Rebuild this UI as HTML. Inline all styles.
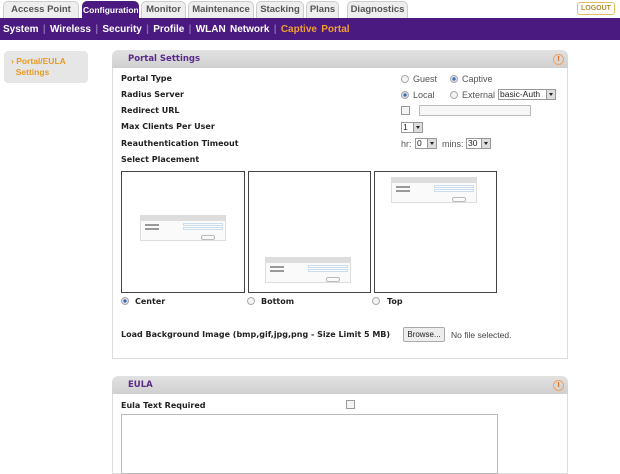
<!DOCTYPE html>
<html><head><style>
*{margin:0;padding:0;box-sizing:border-box}
body{width:620px;height:465px;overflow:hidden;background:#fff;font-family:"Liberation Sans",sans-serif;font-size:9px;color:#222;position:relative}
.a{position:absolute}
.tab{position:absolute;top:1px;height:18px;background:#eee;border:1px solid #ccc;border-bottom:none;border-radius:5px 5px 0 0;font-weight:bold;font-size:9.5px;color:#555;text-align:center;line-height:16px;white-space:nowrap;overflow:hidden}
.b{font-weight:bold}
.lbl{position:absolute;left:121px;font-weight:bold;font-size:8px;font-family:"DejaVu Sans",sans-serif}
.rad{position:absolute;width:8px;height:8px;border-radius:50%;border:1px solid #aaa;background:#f4f4f4}
.rad.on{background:radial-gradient(circle,#3a6fb0 35%,#dde 45%)}
.chk{position:absolute;width:9px;height:9px;border:1px solid #999;background:#f4f4f4}
.sel{position:absolute;height:11px;border:1px solid #999;background:#fff;font-size:8.5px;line-height:9px;padding-left:1px}
.sel i{position:absolute;right:0;top:0;width:9px;height:9px;background:#ddd;border-left:1px solid #999}
.sel i:after{content:"";position:absolute;left:2px;top:3px;border:2.5px solid transparent;border-top:3px solid #222}
.hdr{position:absolute;left:112px;width:456px;height:18px;background:linear-gradient(#e2e2e2,#cfcfcf);border-radius:6px 6px 0 0;color:#5a2a8a;font-weight:bold;font-size:9.5px;line-height:18px;padding-left:16px;font-family:"DejaVu Sans",sans-serif;font-size:8.5px}
.hdr:after{content:"!";position:absolute;right:4px;top:4px;width:9px;height:9px;border:1px solid #f0a060;border-radius:50%;color:#e07020;font-size:7px;line-height:8px;text-align:center}
.img{position:absolute;top:171px;height:122px;border:1px solid #444;background:#fff}
.mini{position:absolute;width:86px;height:26px;border:1px solid #ddd;background:#fafafa}
.mini div{height:5px;background:#ddd}
.mini p{position:absolute;left:42px;width:40px;height:3px;border:1px solid #cde}
.mini s{position:absolute;left:4px;width:14px;height:2px;background:#999}
.mini u{position:absolute;left:60px;top:19px;width:14px;height:5px;border:1px solid #bbb;border-radius:2px}
</style></head><body>
<div class="tab" style="left:3px;width:76px">Access Point</div>
<div class="tab" style="left:82px;width:57px;background:#4a1a80;color:#fff;border-color:#4a1a80;height:20px;font-size:8.5px">Configuration</div>
<div class="tab" style="left:141px;width:45px">Monitor</div>
<div class="tab" style="left:188px;width:66px">Maintenance</div>
<div class="tab" style="left:256px;width:48px">Stacking</div>
<div class="tab" style="left:306px;width:33px">Plans</div>
<div class="tab" style="left:347px;width:61px">Diagnostics</div>
<div class="a" style="left:577px;top:2px;width:38px;height:13px;border:1px solid #e0c060;border-radius:3px;color:#b09030;font-size:7px;text-align:center;line-height:11px;font-weight:bold">LOGOUT</div>
<div class="a" style="left:0;top:18px;width:620px;height:22px;background:#4a1a80"></div>
<div class="a b" style="left:3px;top:24px;color:#fff;font-size:10px;white-space:pre;word-spacing:1.5px">System <span style="color:#8a6ab0">|</span> Wireless <span style="color:#8a6ab0">|</span> Security <span style="color:#8a6ab0">|</span> Profile <span style="color:#8a6ab0">|</span> WLAN Network <span style="color:#8a6ab0">|</span> <span style="color:#f0a030">Captive Portal</span></div>
<div class="a b" style="left:4px;top:51px;width:84px;height:32px;background:#e6e6e6;border-radius:4px;color:#e89a20;font-size:8.5px;padding:5px 0 0 7px;line-height:11px">› Portal/EULA<br>&nbsp;&nbsp;Settings</div>
<div class="hdr" style="top:50px">Portal Settings</div>
<div class="a" style="left:112px;top:68px;width:456px;height:291px;border:1px solid #ddd;border-top:none"></div>
<div class="lbl" style="top:74px">Portal Type</div>
<div class="lbl" style="top:90px">Radius Server</div>
<div class="lbl" style="top:106px">Redirect URL</div>
<div class="lbl" style="top:122px">Max Clients Per User</div>
<div class="lbl" style="top:139px">Reauthentication Timeout</div>
<div class="lbl" style="top:155px">Select Placement</div>
<div class="rad" style="left:401px;top:75px"></div><div class="a" style="left:413px;top:74px;color:#555">Guest</div>
<div class="rad on" style="left:450px;top:75px"></div><div class="a" style="left:462px;top:74px;color:#555">Captive</div>
<div class="rad on" style="left:401px;top:91px"></div><div class="a" style="left:413px;top:90px;color:#555">Local</div>
<div class="rad" style="left:450px;top:91px"></div><div class="a" style="left:462px;top:90px;color:#555">External</div>
<div class="sel" style="left:498px;top:89px;width:58px">basic-Auth<i></i></div>
<div class="chk" style="left:401px;top:106px"></div>
<div class="a" style="left:419px;top:105px;width:112px;height:11px;border:1px solid #bbb;background:#f6f6f6"></div>
<div class="sel" style="left:401px;top:122px;width:22px">1<i></i></div>
<div class="a" style="left:401px;top:139px;color:#555">hr:</div>
<div class="sel" style="left:415px;top:138px;width:22px">0<i></i></div>
<div class="a" style="left:442px;top:139px;color:#555">mins:</div>
<div class="sel" style="left:466px;top:138px;width:25px">30<i></i></div>
<div class="img" style="left:121px;width:124px"><div class="mini" style="left:18px;top:43px"><div></div><s style="top:8px"></s><s style="top:12px"></s><p style="top:7px"></p><p style="top:11px"></p><u></u></div></div>
<div class="img" style="left:248px;width:123px"><div class="mini" style="left:16px;top:85px"><div></div><s style="top:8px"></s><s style="top:12px"></s><p style="top:7px"></p><p style="top:11px"></p><u></u></div></div>
<div class="img" style="left:374px;width:123px"><div class="mini" style="left:16px;top:5px"><div></div><s style="top:8px"></s><s style="top:12px"></s><p style="top:7px"></p><p style="top:11px"></p><u></u></div></div>
<div class="rad on" style="left:121px;top:297px"></div><div class="lbl" style="left:135px;top:297px">Center</div>
<div class="rad" style="left:247px;top:297px"></div><div class="lbl" style="left:261px;top:297px">Bottom</div>
<div class="rad" style="left:372px;top:297px"></div><div class="lbl" style="left:387px;top:297px">Top</div>
<div class="lbl" style="top:330px">Load Background Image (bmp,gif,jpg,png - Size Limit 5 MB)</div>
<div class="a" style="left:403px;top:327px;width:42px;height:15px;border:1px solid #aaa;border-radius:2px;background:#eee;text-align:center;line-height:13px;font-size:8px">Browse...</div>
<div class="a" style="left:451px;top:330px;color:#444;font-size:8.5px">No file selected.</div>
<div class="hdr" style="top:376px">EULA</div>
<div class="a" style="left:112px;top:394px;width:456px;height:80px;border:1px solid #ddd;border-top:none"></div>
<div class="lbl" style="top:401px">Eula Text Required</div>
<div class="chk" style="left:346px;top:400px"></div>
<div class="a" style="left:121px;top:414px;width:377px;height:60px;border:1px solid #bbb"></div>
</body></html>
